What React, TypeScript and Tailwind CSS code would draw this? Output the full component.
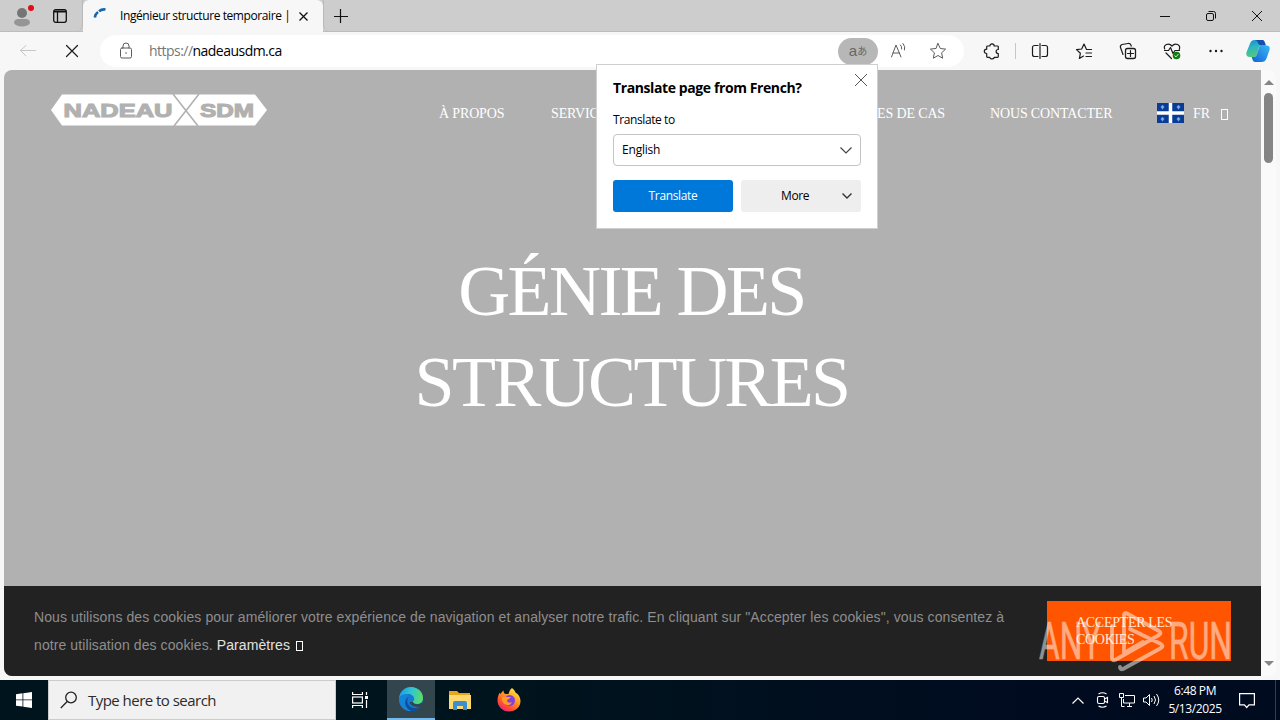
import type { ReactNode } from "react";
import clsx from "clsx";

type IconProps = {
  className?: string;
  children: ReactNode;
};

function Icon({ className, children }: IconProps) {
  return (
    <svg
      viewBox="0 0 20 20"
      fill="none"
      stroke="currentColor"
      strokeLinecap="round"
      strokeLinejoin="round"
      className={clsx("w-5 h-5 shrink-0", className)}
      aria-hidden
    >
      {children}
    </svg>
  );
}

function TabBar() {
  return (
    <div className="flex h-8 shrink-0 bg-[#cdcdcd] border-b border-[#bdbdbd]">
      <div className="flex w-[83px] items-center pl-3 gap-[18px] border-r border-[#b9b9b9] rounded-br-md">
        <svg viewBox="0 0 24 26" className="w-6 h-[26px]" aria-hidden>
          <circle cx="10" cy="10" r="5" fill="#757575" />
          <path d="M2 20c0-3 2-4 4-4h8c2 0 4 1 4 4-1 2-4 3.500-8 3.500S3 22 2 20z" fill="#959595" />
          <circle cx="19" cy="5" r="3" fill="#e30b17" />
        </svg>
        <svg viewBox="0 0 14 14" className="w-3.5 h-3.5 -ml-px" fill="none" stroke="#111" strokeWidth="1.3" aria-hidden>
          <rect x="0.700" y="0.700" width="12.600" height="12.600" rx="2" />
          <path d="M1 2.500h12" strokeWidth="2" />
          <path d="M4.500 3v10" strokeWidth="1.300" />
        </svg>
      </div>
      <div className="flex w-[240px] h-8 items-center rounded-t-md bg-[#f7f7f7] pl-2.5">
        <svg viewBox="0 0 14 14" className="w-3.5 h-3.5 -mt-1" fill="none" stroke="#1767a8" strokeWidth="2.600" aria-hidden>
          <path d="M1.800 10.500A8 8 0 0 1 5 5M6 4.300A8 8 0 0 1 12.500 2.500" />
        </svg>
        <div className="ml-[13px] w-[168px] overflow-hidden whitespace-nowrap text-xs leading-8 tracking-[-0.41px] text-black">
          Ingénieur structure temporaire |
        </div>
        <span className="h-3 w-px bg-gray-300" />
        <svg viewBox="0 0 9 9" className="ml-[10px] w-[9px] h-[9px]" stroke="#111" strokeWidth="1.300" aria-hidden>
          <path d="M0.500 0.500l8 8M8.500 0.500l-8 8" />
        </svg>
      </div>
      <div className="flex flex-1 items-center rounded-bl-md border-l border-[#b9b9b9] pl-2.5">
        <svg viewBox="0 0 14 14" className="w-3.5 h-3.5" stroke="#111" strokeWidth="1.200" aria-hidden>
          <path d="M6.500 0v14M0 7.500h14" />
        </svg>
      </div>
      <div className="flex w-[120px] items-center gap-9">
        <svg viewBox="0 0 10 10" className="w-2.5 h-2.5" stroke="#111" aria-hidden>
          <path d="M0 5.500h10" />
        </svg>
        <svg viewBox="0 0 10 10" className="w-2.5 h-2.5" fill="none" stroke="#111" aria-hidden>
          <rect x="0.500" y="2.500" width="7" height="7" rx="1.500" />
          <path d="M2.500 0.500h5a2 2 0 0 1 2 2v5" />
        </svg>
        <svg viewBox="0 0 10 10" className="w-2.5 h-2.5" stroke="#111" aria-hidden>
          <path d="M0 0l10 10M10 0L0 10" />
        </svg>
      </div>
    </div>
  );
}

function CopilotLogo() {
  return (
    <svg viewBox="0 0 24 24" className="w-6 h-6 shrink-0" aria-hidden>
      <defs>
        <linearGradient id="cp-a" x1="0" y1="0" x2="0.300" y2="1">
          <stop offset="0" stopColor="#1684d6" />
          <stop offset="0.450" stopColor="#2bb5c4" />
          <stop offset="1" stopColor="#55c878" />
        </linearGradient>
        <linearGradient id="cp-b" x1="1" y1="0" x2="0" y2="1">
          <stop offset="0" stopColor="#37bbf2" />
          <stop offset="1" stopColor="#1460d8" />
        </linearGradient>
      </defs>
      <path d="M9 1h7c2 0 2.500 1.500 3 3l.8 2.500h-4c-2 0-2.800 1-3.300 3L11 15c-.6 2-1.500 3-3 3H3.500C.5 18-.2 15.500.6 13L4 4.500C5 2 6.500 1 9 1z" fill="url(#cp-a)" />
      <path d="M9 1h7c2 0 2.500 1.500 3 3l.8 2.500h-4c-2 0-3.300-1-3.800-2.500S10.500 1 9 1z" fill="#174fae" />
      <path d="M15.500 23h-6c-2 0-2.600-1-3.200-3L5.700 18H8c1.500 0 2.400-1 3-3l1.600-5.500c.5-2 1.300-3 3.200-3h4.700c3 0 3.700 2 3 4.500l-3 8.500c-1 2.500-2.500 3.500-5 3.500z" fill="url(#cp-b)" />
    </svg>
  );
}

function Toolbar() {
  return (
    <div className="flex h-[38px] shrink-0 items-center bg-[#f7f7f7] pl-[18px] text-[#1b1b1b]">
      <Icon className="text-[#c6c6c6]">
        <path d="M17.500 9.500h-15M8 4.500l-5.500 5L8 15" />
      </Icon>
      <Icon className="ml-6">
        <path d="M4.500 4.500l11 11M15.500 4.500l-11 11" strokeWidth="1.200" />
      </Icon>
      <div className="ml-[18px] flex h-8 w-[864px] items-center rounded-full bg-white pl-4 text-[#5c5c5c]">
        <Icon>
          <rect x="4.500" y="7" width="11" height="10" rx="1.500" />
          <path d="M7 7V5a3 3 0 0 1 6 0v2" />
          <circle cx="10" cy="12" r="0.800" fill="currentColor" stroke="none" />
        </Icon>
        <div className="ml-[13px] text-sm leading-8 tracking-[-0.53px] text-[#767676]">
          https://<span className="text-black">nadeausdm.ca</span>
        </div>
        <div className="ml-auto flex h-[27px] w-10 items-center justify-center rounded-full bg-[#b7b7b7] text-[#676767]">
          <span className="-mt-0.5 font-['Liberation_Sans',sans-serif] text-[15px] leading-none">a</span>
          <span className="font-['Noto_Sans_CJK_JP',sans-serif] text-[10px] leading-none">あ</span>
        </div>
        <Icon className="ml-2.5">
          <path d="M3.500 16L8 4l5 12M5 12h6.500M12.500 4q1.500 1.500 1.200 4M15 2.500q2.800 3 1.500 6.500" />
        </Icon>
        <Icon className="ml-5 mr-4">
          <path d="M10 2.500l2.300 5 5.300.6-4 3.700 1.100 5.400-4.700-2.700-4.700 2.700 1.100-5.400-4-3.700 5.300-.6z" />
        </Icon>
      </div>
      <Icon className="ml-[18px]">
        <path d="M5.500 5h2.300c0-2.800 4.400-2.800 4.400 0h3.300a.8.800 0 0 1 .8.800V8.500c-2.900 0-2.900 4 0 4v3a.8.800 0 0 1-.8.800h-3.300c0 2.200-4.400 2.200-4.400 0H5.500a.8.800 0 0 1-.8-.8v-3c-3.200 0-3.200-4.300 0-4.300V5.800a.8.800 0 0 1 .8-.8z" strokeWidth="1.200" />
      </Icon>
      <span className="ml-[13px] h-4 w-px bg-[#c6c6c6]" />
      <Icon className="ml-3.5">
        <path d="M8 4.500H4.500a2 2 0 0 0-2 2v7a2 2 0 0 0 2 2H8M12 4.500h3.500a2 2 0 0 1 2 2v7a2 2 0 0 1-2 2H12M10 2.500v15" strokeWidth="1.200" />
      </Icon>
      <Icon className="ml-6">
        <path d="M17.500 8.500h-5L10 3 7.700 8l-5.200.6 3.900 3.600-1 5.300 4.100-2.400M12 12h5.500M12 15.500h5.500" strokeWidth="1.200" />
      </Icon>
      <Icon className="ml-6">
        <rect x="7.500" y="7.500" width="10" height="10" rx="2" strokeWidth="1.300" />
        <path d="M12.500 9.500v6M9.500 12.500h6M5 13.500l-2.500-7c-.5-1.500.3-2.500 1.500-3l6-1c1.500-.2 2.500.5 3 1.700l.2 1" strokeWidth="1.200" />
      </Icon>
      <Icon className="ml-6">
        <path d="M2.700 8C1 4 6.500 1 10 5c3.500-4 9 -1 7.300 3.500M2.500 9.500h4l2-3 2.500 6 2-3h4.500M4 12l5.500 5.500" strokeWidth="1.200" />
        <circle cx="14.500" cy="14.500" r="3.800" fill="#107c10" stroke="none" />
        <path d="M12.800 14.700l1.200 1.200 2.200-2.600" stroke="#fff" strokeWidth="0.800" />
      </Icon>
      <Icon className="ml-6">
        <g fill="currentColor" stroke="none">
          <circle cx="4.500" cy="10" r="1.200" />
          <circle cx="10" cy="10" r="1.200" />
          <circle cx="15.500" cy="10" r="1.200" />
        </g>
      </Icon>
      <div className="ml-5">
        <CopilotLogo />
      </div>
    </div>
  );
}

function BrandLogo() {
  return (
    <svg viewBox="0 0 216 32" className="w-[216px] h-8" aria-hidden>
      <path d="M11 0.500h193l12 15.500-12 15.500H11L0 16z" fill="#fff" />
      <path d="M122 0l25 32M148 0l-25 32" stroke="#b1b1b1" strokeWidth="1.600" />
      <g fill="#b1b1b1" stroke="#b1b1b1" strokeWidth="1.100" fontFamily="Liberation Sans, sans-serif" fontWeight="700" fontSize="19">
        <text x="12.500" y="22.500" textLength="109" lengthAdjust="spacingAndGlyphs">NADEAU</text>
        <text x="149" y="22.500" textLength="54" lengthAdjust="spacingAndGlyphs">SDM</text>
      </g>
    </svg>
  );
}

const FLEURS = [
  [5.5, 4],
  [21.5, 4],
  [5.5, 16],
  [21.5, 16],
];

function QuebecFlag() {
  return (
    <svg viewBox="0 0 27 20" className="w-[27px] h-5" aria-hidden>
      <rect width="27" height="20" fill="#0a3c96" />
      <path d="M13.500 0v20M0 10h27" stroke="#fff" strokeWidth="3.500" />
      {FLEURS.map(([x, y]) => (
        <path key={`${x}-${y}`} d={`M${x} ${y - 2}l1.200 2-1.200 2.200-1.200-2.200z M${x - 2} ${y}h4`} fill="#8fc0ee" stroke="#6fa5df" strokeWidth="0.700" />
      ))}
    </svg>
  );
}

// empty box shown where the icon font has no glyph
function MissingGlyph({ className }: { className?: string }) {
  return <span className={clsx("inline-block h-[10px] w-[7px] border border-white", className)} />;
}

function SiteHeader() {
  return (
    <header className="flex h-[86px] items-center pl-[47px] font-['Liberation_Serif',serif] text-sm text-white">
      <div className="-mt-[7px]">
        <BrandLogo />
      </div>
      <nav className="ml-[172px] mt-0.5 flex items-center whitespace-nowrap tracking-[-0.15px]">
        <a className="w-[112px]">À PROPOS</a>
        <a className="w-[222px]">SERVICES</a>
        <a className="w-[172px] text-right">ÉTUDES DE CAS</a>
        <a className="ml-[45px] w-[122px]">NOUS CONTACTER</a>
      </nav>
      <div className="ml-[45px] flex items-center">
        <QuebecFlag />
        <span className="ml-[9px] mt-0.5">FR</span>
        <MissingGlyph className="ml-[11px] mt-0.5 h-[11px]" />
      </div>
    </header>
  );
}

function CookieBanner() {
  return (
    <div className="flex h-[90px] shrink-0 items-center bg-[#222] pl-[30px] pr-[30px]">
      <p className="w-[1013px] whitespace-nowrap font-['Liberation_Sans',sans-serif] text-sm leading-7 tracking-[0.095px] text-[#8e8e8e]">
        Nous utilisons des cookies pour améliorer votre expérience de navigation et analyser notre trafic. En cliquant sur "Accepter les cookies", vous consentez à
        <br />
        notre utilisation des cookies. <span className="text-[#e2e2e2]">Paramètres</span>
        <MissingGlyph className="ml-1.5 -mb-px" />
      </p>
      <button
        type="button"
        className="h-[60px] w-[184px] shrink-0 bg-[#ff5500] pl-[29px] text-left font-['Liberation_Serif',serif] text-sm leading-[17px] tracking-[-0.3px] text-[#ffe9d8]"
      >
        ACCEPTER LES
        <br />
        COOKIES
      </button>
    </div>
  );
}

function ScrollBar() {
  return (
    <div className="flex w-[15px] flex-col items-center rounded-r-lg bg-[#fafafa] py-2.5">
      <svg viewBox="0 0 10 5" className="w-2.5 h-[5px]" fill="#858585" aria-hidden>
        <path d="M5 0l5 5H0z" />
      </svg>
      <div className="mt-2 h-[70px] w-[9px] rounded-full bg-[#858585]" />
      <svg viewBox="0 0 10 5" className="mt-auto w-2.5 h-[5px]" fill="#858585" aria-hidden>
        <path d="M0 0h10L5 5z" />
      </svg>
    </div>
  );
}

function TranslatePopup() {
  return (
    <div
      role="dialog"
      className="absolute left-[596px] top-16 h-[165px] w-[282px] border border-[#cfcfcf] bg-white px-4 text-xs text-black"
    >
      <button type="button" className="absolute right-2.5 top-[9px]" aria-label="Close">
        <svg viewBox="0 0 12 12" className="w-3 h-3" stroke="#555" aria-hidden>
          <path d="M0 0l12 12M12 0L0 12" />
        </svg>
      </button>
      <h2 className="pt-[13px] text-sm font-bold leading-5 tracking-[-0.4px]">Translate page from French?</h2>
      <p className="mt-3.5 leading-4 tracking-[-0.4px]">Translate to</p>
      <div className="mt-1.5 flex h-8 items-center justify-between rounded-sm border border-[#c4c4c4] pl-2 pr-2 tracking-[-0.2px]">
        English
        <svg viewBox="0 0 12 7" className="w-3 h-[7px]" fill="none" stroke="#444" strokeWidth="1.200" aria-hidden>
          <path d="M0.500 0.500L6 6l5.500-5.500" />
        </svg>
      </div>
      <div className="mt-3.5 flex gap-2 tracking-[-0.35px]">
        <button type="button" className="h-8 w-[120px] rounded-[3px] bg-[#0078d9] text-white">
          Translate
        </button>
        <button type="button" className="flex h-8 w-[120px] items-center rounded-[3px] bg-[#eee] pl-10 pr-[9px]">
          More
          <svg viewBox="0 0 10 6" className="ml-auto w-2.5 h-1.5" fill="none" stroke="#333" strokeWidth="1.400" aria-hidden>
            <path d="M0.500 0.500L5 5l4.500-4.500" />
          </svg>
        </button>
      </div>
    </div>
  );
}

function Watermark() {
  return (
    <svg viewBox="0 0 196 64" className="absolute left-[1038px] top-[609px] w-[196px] h-16 opacity-50" aria-hidden>
      <g fill="#fff" stroke="#fff" strokeWidth="0.500" fontFamily="Roboto, sans-serif" fontWeight="400" fontSize="52">
        <text x="1" y="50" textLength="62" lengthAdjust="spacingAndGlyphs">ANY</text>
        <text x="131" y="50" textLength="63" lengthAdjust="spacingAndGlyphs">RUN</text>
      </g>
      <path
        d="M86 44V6q0-3 3-1.500L121 22q3 2 0 4L77 51q-3 1-3-2V17M92 20l31 15q3 2 0 4L85 60q-3 1-3-2M86 44l19-11"
        fill="none"
        stroke="#fff"
        strokeWidth="3.800"
        strokeLinejoin="round"
        strokeLinecap="round"
      />
    </svg>
  );
}

function EdgeLogo() {
  return (
    <svg viewBox="0 0 24 24" className="w-6 h-6" aria-hidden>
      <defs>
        <linearGradient id="edge-top" x1="0" y1="0.300" x2="1" y2="0.500">
          <stop offset="0" stopColor="#1a9fe0" />
          <stop offset="0.500" stopColor="#32c5d0" />
          <stop offset="1" stopColor="#5ddc64" />
        </linearGradient>
      </defs>
      <circle cx="12" cy="12" r="12" fill="#1479d1" />
      <path d="M0 11C1 4.500 6 0 12 0c7 0 12 5 12 11 0 4-3 6-6 6-2.500 0-4-1-4-2 0-.8 1.200-1.300 1.200-3 0-3-3-5-6.200-5C5 7 1.500 8.500 0 11z" fill="url(#edge-top)" />
      <path d="M9 8.500C4 11 5 21 13 23.900 8 25 0 21 0 12 1 8 6 6.500 9 8.500z" fill="#1484d8" />
      <path d="M9.500 10C6.500 14 9 20.500 15 21c3 .2 5.500-1 7-2.500C20 22 16.500 24 13 24 5 22 4.500 12.500 9.500 10z" fill="#0c4f9e" />
      <path d="M14 15c0 2 4.500 3.500 8.500.8L24 17l-1.500 2.500c-5 1-11 .5-12-4.500z" fill="#34464d" />
    </svg>
  );
}

function FirefoxLogo() {
  return (
    <svg viewBox="0 0 24 24" className="w-6 h-6" aria-hidden>
      <defs>
        <linearGradient id="ff" x1="0.850" y1="0" x2="0.200" y2="1">
          <stop offset="0" stopColor="#fff04a" />
          <stop offset="0.450" stopColor="#ff9420" />
          <stop offset="0.750" stopColor="#ff4a38" />
          <stop offset="1" stopColor="#e8207c" />
        </linearGradient>
      </defs>
      <path d="M15 0c2 1.500 3 3 3.500 4.500 3 1.500 5 5 5 8.500 0 6-5 10.500-11.500 10.500S.5 18.500.5 12.500c0-3.500 1-6 2.500-8 0 0 .5 1 .6 1.700C4.500 4.500 5.500 3 6.500 2.500c0 2 .5 3 2 3.500h3C12 4 13 1.500 15 0z" fill="url(#ff)" />
      <circle cx="12.500" cy="12.500" r="5.500" fill="#8541d4" />
      <path d="M5 9.500c2-1.500 4-1.200 5.500-.5h3c0 2-3 2-3.500 3.500 0 2 2.500 3 5 1.500-1 3.500-5 4-7.500 2S4.500 11.500 5 9.500z" fill="#ff9a25" />
    </svg>
  );
}

function Taskbar() {
  return (
    <div className="flex h-10 shrink-0 items-center bg-linear-to-r from-[#00141d] from-40% to-[#000b20] to-80% text-white">
      <div className="flex w-12 justify-center">
        <svg viewBox="0 0 16 16" className="w-4 h-4" fill="#fff" aria-hidden>
          <path d="M0 2.200l6.500-.9v6.200H0zM7.300 1.200L16 0v7.500H7.300zM0 8.300h6.500v6.300L0 13.700zM7.300 8.300H16V16l-8.700-1.300z" />
        </svg>
      </div>
      <div className="flex h-10 w-72 items-center border border-[#ccc] bg-[#f1f1f1] pl-[11px] text-[#2b2b2b]">
        <svg viewBox="0 0 18 18" className="w-[18px] h-[18px]" fill="none" stroke="#222" strokeWidth="1.300" aria-hidden>
          <circle cx="11" cy="6.500" r="5.300" />
          <path d="M7.200 10.500L0.800 17" />
        </svg>
        <span className="ml-2.5 text-[15px] tracking-[-0.53px]">Type here to search</span>
      </div>
      <div className="flex w-[51px] justify-center pr-1">
        <svg viewBox="0 0 16 16" className="w-4 h-4" fill="none" stroke="#fff" strokeWidth="1.200" aria-hidden>
          <path d="M0.600 0v2.500h9.800V0M0.600 16v-2.500h9.800V16M14.500 0v3M14.500 8v8" />
          <rect x="0.600" y="5" width="9.800" height="6" />
          <path d="M13 5.500h3" strokeWidth="3" />
        </svg>
      </div>
      <div className="flex h-10 w-12 items-center justify-center border-b-2 border-[#76b9ed] bg-[#34464d]">
        <EdgeLogo />
      </div>
      <div className="flex w-[49px] justify-center">
        <svg viewBox="0 0 22 19" className="w-[22px] h-[19px]" aria-hidden>
          <path d="M0 0h8l2 2h11v3H0z" fill="#e7a61e" />
          <path d="M0 4h22v14H0z" fill="#ffd96b" />
          <path d="M4 19v-7a2 2 0 0 1 2-2h10a2 2 0 0 1 2 2v7h-4v-4H8v4z" fill="#398fd1" />
        </svg>
      </div>
      <div className="flex w-[49px] justify-center">
        <FirefoxLogo />
      </div>
      <div className="ml-auto flex h-10 items-center">
        <svg viewBox="0 0 12 7" className="w-3 h-[7px]" fill="none" stroke="#fff" strokeWidth="1.200" aria-hidden>
          <path d="M0.500 6.500L6 1l5.500 5.500" />
        </svg>
        <svg viewBox="0 0 13 16" className="ml-3 w-[13px] h-4" fill="none" stroke="#fff" strokeWidth="1.100" aria-hidden>
          <rect x="1.500" y="4.500" width="7" height="7" rx="1.500" />
          <path d="M8.500 7l3-1.500v5l-3-1.500M2.500 2q4-2.500 8 0M2.500 14q4 2.500 8 0" />
        </svg>
        <svg viewBox="0 0 16 14" className="ml-2.5 w-4 h-3.5" fill="none" stroke="#fff" aria-hidden>
          <path d="M6 2.500h9.500v7.500H4.500V6M8 13.500h5M10.500 10v3.500M0.500 0.500h4v4h-4zM2.500 4.500v9h3" />
        </svg>
        <svg viewBox="0 0 17 14" className="ml-2 w-[17px] h-3.5" fill="none" stroke="#fff" aria-hidden>
          <path d="M0.500 5h2.500l3.500-3.500v11L3 9H0.500zM8.500 5q1.500 2 0 4M11 3q3 4 0 8M13.500 1q4.500 6 0 12" />
        </svg>
        <div className="w-[70px] text-center text-xs leading-[18px] tracking-[-0.4px]">
          6:48 PM
          <br />
          5/13/2025
        </div>
        <svg viewBox="0 0 16 17" className="ml-[9px] mr-5 w-4 h-[17px]" fill="none" stroke="#fff" strokeWidth="1.200" aria-hidden>
          <path d="M0.600 1.600h14.800v11.300H10L7.700 15.500 5.400 12.900H0.600z" />
        </svg>
        <span className="mr-1 h-10 w-px bg-[#353e4c]" />
      </div>
    </div>
  );
}

export default function App() {
  return (
    <div className="relative flex h-[720px] w-[1280px] flex-col overflow-hidden bg-[#f7f7f7] font-['Open_Sans',sans-serif]">
      <TabBar />
      <Toolbar />
      <div className="mb-1 ml-1 mr-1 flex flex-1 overflow-hidden rounded-lg bg-[#fafafa]">
        <main className="flex w-[1257px] flex-col bg-[#b1b1b1]">
          <SiteHeader />
          <h1 className="mt-[90px] flex-1 pr-0.5 text-center font-['Liberation_Serif',serif] text-[72px] leading-[91px] tracking-[-2.6px] text-white">
            GÉNIE DES
            <br />
            STRUCTURES
          </h1>
          <CookieBanner />
        </main>
        <ScrollBar />
      </div>
      <Taskbar />

      <TranslatePopup />
      <Watermark />
    </div>
  );
}
